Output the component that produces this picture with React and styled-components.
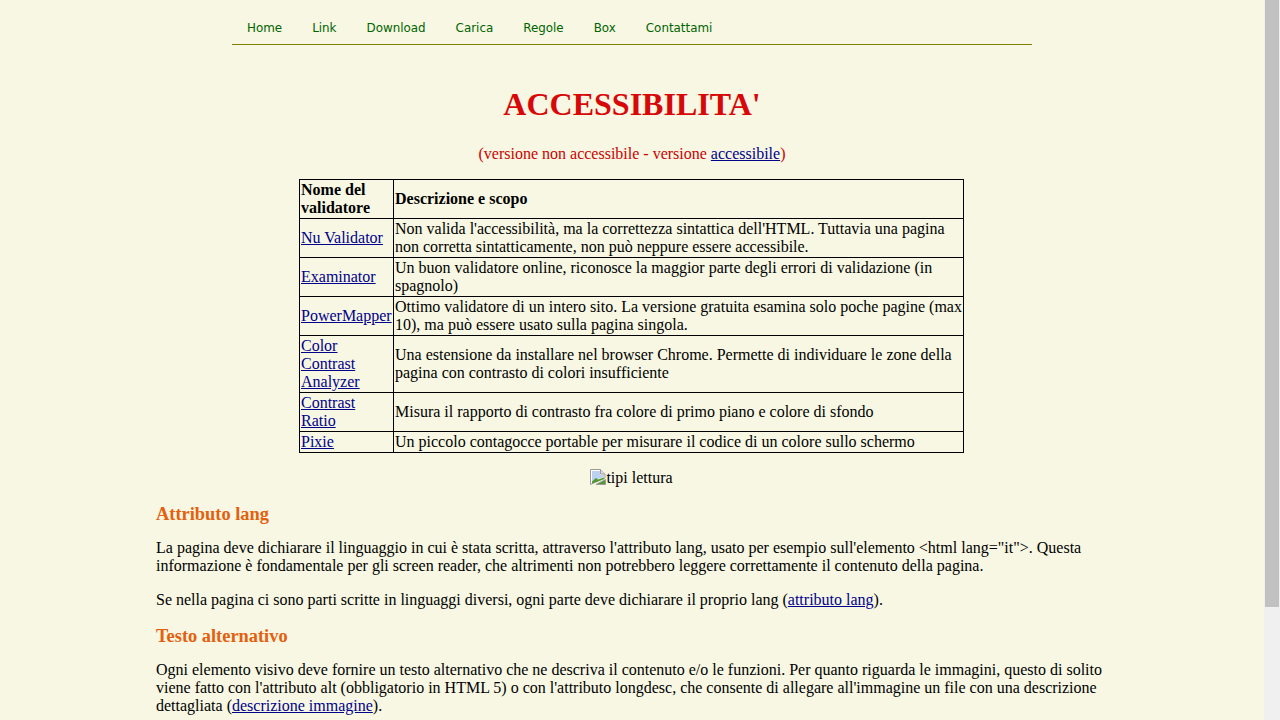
import styled, { createGlobalStyle } from 'styled-components'

const GlobalStyle = createGlobalStyle`
  body {
    margin: 0;
    background: #f7f7e3;
    color: #000;
    font-family: "Liberation Serif", "Times New Roman", serif;
    font-size: 16px;
  }
`

const Page = styled.div`
  padding-right: 16px;
  padding-bottom: 134px;
`

// the headless browser hides real scrollbars, so this one is drawn over the page edge
const ScrollTrack = styled.div`
  position: fixed;
  top: 0;
  right: 0;
  bottom: 0;
  width: 16px;
  background: #f0f0f0;
`

const ScrollThumb = styled.div`
  height: 607px;
  margin: 0 1px;
  background: #c1c1c1;
`

const NavBar = styled.nav`
  width: 800px;
  height: 32px;
  margin: 0 auto;
  padding-top: 12px;
  display: flex;
  align-items: center;
  border-bottom: 1px solid #808000;
`

const NavLink = styled.a`
  padding: 0 15px;
  font-family: "DejaVu Sans", Verdana, sans-serif;
  font-size: 11.9px;
  color: #006400;
  text-decoration: none;
`

const Content = styled.main`
  width: 952px;
  margin: 0 auto;
`

const Title = styled.h1`
  margin: 41px 0 0;
  text-align: center;
  font-size: 32px;
  font-weight: bold;
  color: #d80808;
`

const Subtitle = styled.p`
  margin: 22px 0 16px;
  text-align: center;
  color: #cc0000;
`

const TextLink = styled.a`
  color: #00008b;
  text-decoration: underline;
`

const Table = styled.table`
  width: 665px;
  margin-left: 143px;
  border-collapse: collapse;
`

const HeadCell = styled.th`
  border: 1px solid #000;
  padding: 1px;
  text-align: left;
  width: ${(p) => (p.$narrow ? '91px' : 'auto')};
`

const Cell = styled.td`
  border: 1px solid #000;
  padding: 1px;
`

const ImageLine = styled.p`
  margin: 16px 0;
  padding-right: 1px;
  text-align: center;
`

const BrokenIcon = styled.svg`
  width: 16px;
  height: 16px;
  vertical-align: -2px;
`

const SectionTitle = styled.h3`
  margin: 17px 0 14px;
  font-size: 18.4px;
  font-weight: bold;
  color: #e4600f;
`

const Paragraph = styled.p`
  margin: 16px 0;

  ${SectionTitle} + & {
    margin-top: 14px;
  }
`

const navItems = ['Home', 'Link', 'Download', 'Carica', 'Regole', 'Box', 'Contattami']

const validators = [
  {
    name: 'Nu Validator',
    text: "Non valida l'accessibilità, ma la correttezza sintattica dell'HTML. Tuttavia una pagina non corretta sintatticamente, non può neppure essere accessibile.",
  },
  {
    name: 'Examinator',
    text: 'Un buon validatore online, riconosce la maggior parte degli errori di validazione (in spagnolo)',
  },
  {
    name: 'PowerMapper',
    text: 'Ottimo validatore di un intero sito. La versione gratuita esamina solo poche pagine (max 10), ma può essere usato sulla pagina singola.',
  },
  {
    name: 'Color Contrast Analyzer',
    text: 'Una estensione da installare nel browser Chrome. Permette di individuare le zone della pagina con contrasto di colori insufficiente',
  },
  {
    name: 'Contrast Ratio',
    text: 'Misura il rapporto di contrasto fra colore di primo piano e colore di sfondo',
  },
  {
    name: 'Pixie',
    text: 'Un piccolo contagocce portable per misurare il codice di un colore sullo schermo',
  },
]

export default function App () {
  return (
    <Page>
      <GlobalStyle />
      <ScrollTrack>
        <ScrollThumb />
      </ScrollTrack>

      <NavBar>
        {navItems.map((item) => (
          <NavLink key={item} href="#">{item}</NavLink>
        ))}
      </NavBar>

      <Content>
        <Title>ACCESSIBILITA'</Title>
        <Subtitle>
          (versione non accessibile - versione <TextLink href="#">accessibile</TextLink>)
        </Subtitle>

        <Table>
          <thead>
            <tr>
              <HeadCell $narrow>Nome del validatore</HeadCell>
              <HeadCell>Descrizione e scopo</HeadCell>
            </tr>
          </thead>
          <tbody>
            {validators.map((row) => (
              <tr key={row.name}>
                <Cell><TextLink href="#">{row.name}</TextLink></Cell>
                <Cell>{row.text}</Cell>
              </tr>
            ))}
          </tbody>
        </Table>

        <ImageLine>
          <BrokenIcon viewBox="0 0 16 16">
            <path d="M.5 .5h10l4.500 4.500v4L.5 15.500z" fill="#fff" stroke="#9a9a9a" />
            <path d="M10.500 .5v4.500h4.500" fill="#e0e0e0" stroke="#9a9a9a" />
            <path d="M2 2h8v4h4v2L2 12z" fill="#bcd0f0" />
            <path d="M2 12.500l4-3.500 2 1.500L14 8.500v1.500L2 14.500z" fill="#4f9a2e" />
            <path d="M6 15.500L15.500 10.500v5z" fill="#4f9a2e" stroke="#9a9a9a" />
          </BrokenIcon>
          tipi lettura
        </ImageLine>

        <SectionTitle>Attributo lang</SectionTitle>
        <Paragraph>
          La pagina deve dichiarare il linguaggio in cui è stata scritta, attraverso l'attributo lang, usato per esempio sull'elemento &lt;html lang="it"&gt;. Questa informazione è fondamentale per gli screen reader, che altrimenti non potrebbero leggere correttamente il contenuto della pagina.
        </Paragraph>
        <Paragraph>
          Se nella pagina ci sono parti scritte in linguaggi diversi, ogni parte deve dichiarare il proprio lang (<TextLink href="#">attributo lang</TextLink>).
        </Paragraph>

        <SectionTitle>Testo alternativo</SectionTitle>
        <Paragraph>
          Ogni elemento visivo deve fornire un testo alternativo che ne descriva il contenuto e/o le funzioni. Per quanto riguarda le immagini, questo di solito viene fatto con l'attributo alt (obbligatorio in HTML 5) o con l'attributo longdesc, che consente di allegare all'immagine un file con una descrizione dettagliata (<TextLink href="#">descrizione immagine</TextLink>).
        </Paragraph>
      </Content>
    </Page>
  )
}
